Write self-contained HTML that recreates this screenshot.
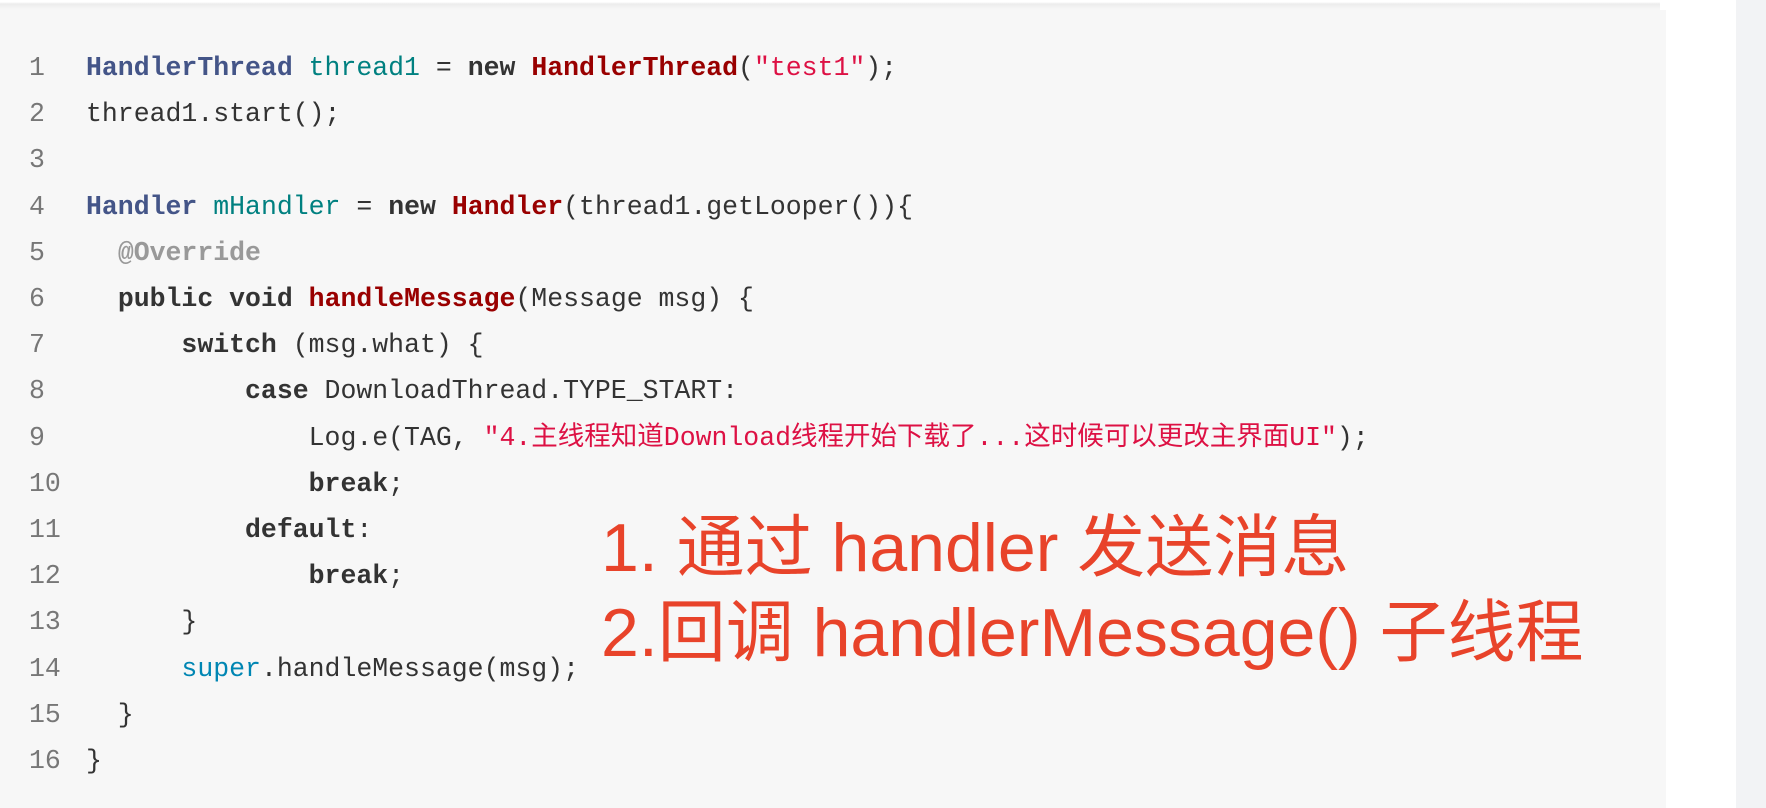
<!DOCTYPE html>
<html><head><meta charset="utf-8"><style>
html,body{margin:0;padding:0;width:1766px;height:808px;overflow:hidden;background:#fff;}
.side{position:absolute;left:1736px;top:0;width:30px;height:808px;background:#f2f3f5;}
.block{position:absolute;left:0;top:10px;width:1666px;height:798px;background:#f7f7f7;}
.shadow{position:absolute;left:0;top:0;width:1660px;height:10px;background:linear-gradient(#fff 0,#fff 2px,#ececec 4px,#f4f4f4 8px,#f7f7f7 10px);}
.ln,.code{position:absolute;font-family:"Liberation Mono","Noto Sans CJK SC",monospace;font-size:26.5px;line-height:46.2px;white-space:pre;color:#333;}
.ln{left:29px;color:#777;width:30px;}
.code{left:86px;}
.t{color:#445588;font-weight:bold}
.v{color:#008080}
.k{font-weight:bold;color:#333}
.c{color:#990000;font-weight:bold}
.s{color:#dd1144}
.a{color:#999;font-weight:bold}
.b{color:#0086b3}
.note{position:absolute;left:601px;font-family:"Liberation Sans","Noto Sans CJK SC",sans-serif;font-size:68px;color:#e8432a;white-space:pre;line-height:80px;}
</style></head><body>
<div class="shadow"></div>
<div class="block"></div>
<div class="side"></div>
<div class="ln" style="top:45px">1
2
3
4
5
6
7
8
9
10
11
12
13
14
15
16</div>
<div class="code" style="top:45px"><span class="t">HandlerThread</span> <span class="v">thread1</span> = <span class="k">new</span> <span class="c">HandlerThread</span>(<span class="s">"test1"</span>);
thread1.start();

<span class="t">Handler</span> <span class="v">mHandler</span> = <span class="k">new</span> <span class="c">Handler</span>(thread1.getLooper()){
  <span class="a">@Override</span>
  <span class="k">public</span> <span class="k">void</span> <span class="c">handleMessage</span>(Message msg) {
      <span class="k">switch</span> (msg.what) {
          <span class="k">case</span> DownloadThread.TYPE_START:
              Log.e(TAG, <span class="s">"4.主线程知道Download线程开始下载了...这时候可以更改主界面UI"</span>);
              <span class="k">break</span>;
          <span class="k">default</span>:
              <span class="k">break</span>;
      }
      <span class="b">super</span>.handleMessage(msg);
  }
}</div>
<div class="note" style="top:508px">1. 通过 handler 发送消息</div>
<div class="note" style="top:593px">2.回调 handlerMessage() 子线程</div>
</body></html>
